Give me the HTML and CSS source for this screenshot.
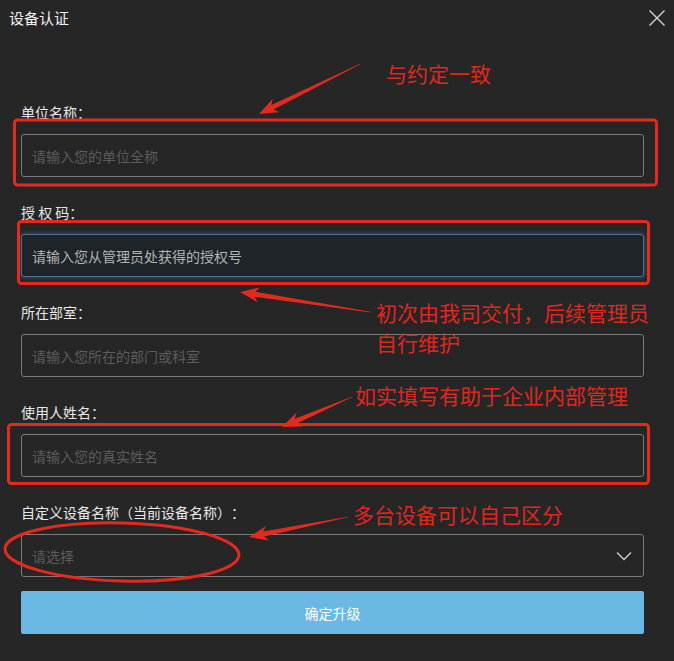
FILE: index.html
```html
<!DOCTYPE html>
<html lang="zh-CN">
<head>
  <meta charset="UTF-8">
  <meta name="viewport" content="width=device-width, initial-scale=1.0">
  <title>设备认证</title>
  <link rel="stylesheet" href="styles.css">
</head>
<body>

  <div class="dialog">
    <div class="dialog-header">
      <span class="dialog-title">设备认证</span>
      <button class="close" type="button">
        <svg width="18" height="18" viewBox="0 0 18 18">
          <path d="M1.5 1.5 L16.5 16.5 M16.5 1.5 L1.5 16.5" stroke="#d6d6d6" stroke-width="1.4" fill="none"/>
        </svg>
      </button>
    </div>

    <form class="form">
      <div class="field">
        <label>单位名称：</label>
        <input class="input" type="text" placeholder="请输入您的单位全称">
      </div>
      <div class="field">
        <label>授 权 码：</label>
        <input class="input input-focus" type="text" placeholder="请输入您从管理员处获得的授权号">
      </div>
      <div class="field">
        <label>所在部室：</label>
        <input class="input" type="text" placeholder="请输入您所在的部门或科室">
      </div>
      <div class="field">
        <label>使用人姓名：</label>
        <input class="input" type="text" placeholder="请输入您的真实姓名">
      </div>
      <div class="field field-last">
        <label>自定义设备名称（当前设备名称）：</label>
        <div class="select">
          <span class="select-placeholder">请选择</span>
          <svg width="16" height="10" viewBox="0 0 16 10">
            <path d="M1 1.5 L8 8.5 L15 1.5" stroke="#cfcfcf" stroke-width="1.3" fill="none"/>
          </svg>
        </div>
      </div>
      <button class="submit" type="button">确定升级</button>
    </form>

    <!-- 标注层 -->
    <svg class="marks" width="674" height="661" viewBox="0 0 674 661">
      <g fill="none" stroke="#e42a1f" stroke-width="3">
        <rect x="14.5" y="120" width="642" height="65" rx="3"/>
        <rect x="18.5" y="221.5" width="630" height="62" rx="3"/>
        <rect x="8.5" y="424.5" width="640" height="59" rx="3"/>
        <ellipse cx="122" cy="552" rx="117" ry="29" transform="rotate(1.5 122 552)"/>
      </g>
      <g fill="#e42a1f">
        <polygon transform="translate(259 114) rotate(-26.3)" points="0,0 19,-7.5 15,-2.5 113,-0.3 113,0.3 15,2.5 19,7.5"/>
        <polygon transform="translate(240 292) rotate(8.75)" points="0,0 19,-7.5 15,-2.5 132,-0.3 132,0.3 15,2.5 19,7.5"/>
        <polygon transform="translate(282 427) rotate(-23.2)" points="0,0 19,-7.5 15,-2.5 76,-0.3 76,0.3 15,2.5 19,7.5"/>
        <polygon transform="translate(249 537) rotate(-11.4)" points="0,0 19,-7.5 15,-2.5 101,-0.3 101,0.3 15,2.5 19,7.5"/>
      </g>
    </svg>
    <span class="note note-1">与约定一致</span>
    <span class="note note-2">初次由我司交付，后续管理员<br>自行维护</span>
    <span class="note note-3">如实填写有助于企业内部管理</span>
    <span class="note note-4">多台设备可以自己区分</span>
  </div>

</body>
</html>
```

FILE: styles.css
```css
body {
  margin: 0;
  padding: 0;
  background: #262626;
  font-family: "Noto Sans CJK SC", "Noto Sans", sans-serif;
  overflow: hidden;
}

.dialog {
  position: relative;
  width: 674px;
  height: 661px;
  background: #262626;
}

.dialog-header {
  display: flex;
  justify-content: space-between;
  align-items: center;
  height: 36px;
  padding: 0 8px 0 9px;
}

.dialog-title {
  font-size: 15px;
  line-height: 20px;
  color: #f0f0f0;
}

.close {
  display: flex;
  padding: 0;
  margin-top: 0;
  background: none;
  border: none;
  cursor: pointer;
}

.form {
  padding: 66px 30px 0 21px;
}

.field {
  margin-bottom: 25px;
}

.field-last {
  margin-bottom: 14px;
}

.field label {
  display: block;
  font-size: 14px;
  line-height: 20px;
  color: #e8e8e8;
  margin-bottom: 12px;
  text-spacing-trim: space-all;
}

.input {
  display: block;
  box-sizing: border-box;
  width: 100%;
  height: 43px;
  padding: 0 10px;
  border: 1px solid #7b7b7b;
  border-radius: 3px;
  background: #262626;
  color: #ddd;
  font-family: inherit;
  font-size: 14px;
  outline: none;
}

.input::placeholder {
  color: #5c5c5c;
}

.input-focus {
  border-color: #4f7190;
  background: #1f2428;
  box-shadow: 0 0 5px rgba(84, 140, 190, 0.55);
}

.input-focus::placeholder {
  color: #b4b4b4;
}

.select {
  display: flex;
  justify-content: space-between;
  align-items: center;
  box-sizing: border-box;
  height: 43px;
  padding: 0 11px 0 10px;
  border: 1px solid #7b7b7b;
  border-radius: 3px;
}

.select-placeholder {
  font-size: 14px;
  color: #5c5c5c;
}

.submit {
  display: block;
  width: 100%;
  height: 43px;
  border: none;
  border-radius: 2px;
  background: #6bb8e4;
  color: #fff;
  font-family: inherit;
  font-size: 14px;
  cursor: pointer;
}

.marks {
  position: absolute;
  top: 0;
  left: 0;
  pointer-events: none;
}

.note {
  position: absolute;
  font-size: 21px;
  line-height: 30px;
  color: #e0271e;
  white-space: nowrap;
}

.note-1 { left: 386px; top: 58px; }
.note-2 { left: 376px; top: 297px; }
.note-3 { left: 355px; top: 380px; }
.note-4 { left: 353px; top: 499px; }
```
